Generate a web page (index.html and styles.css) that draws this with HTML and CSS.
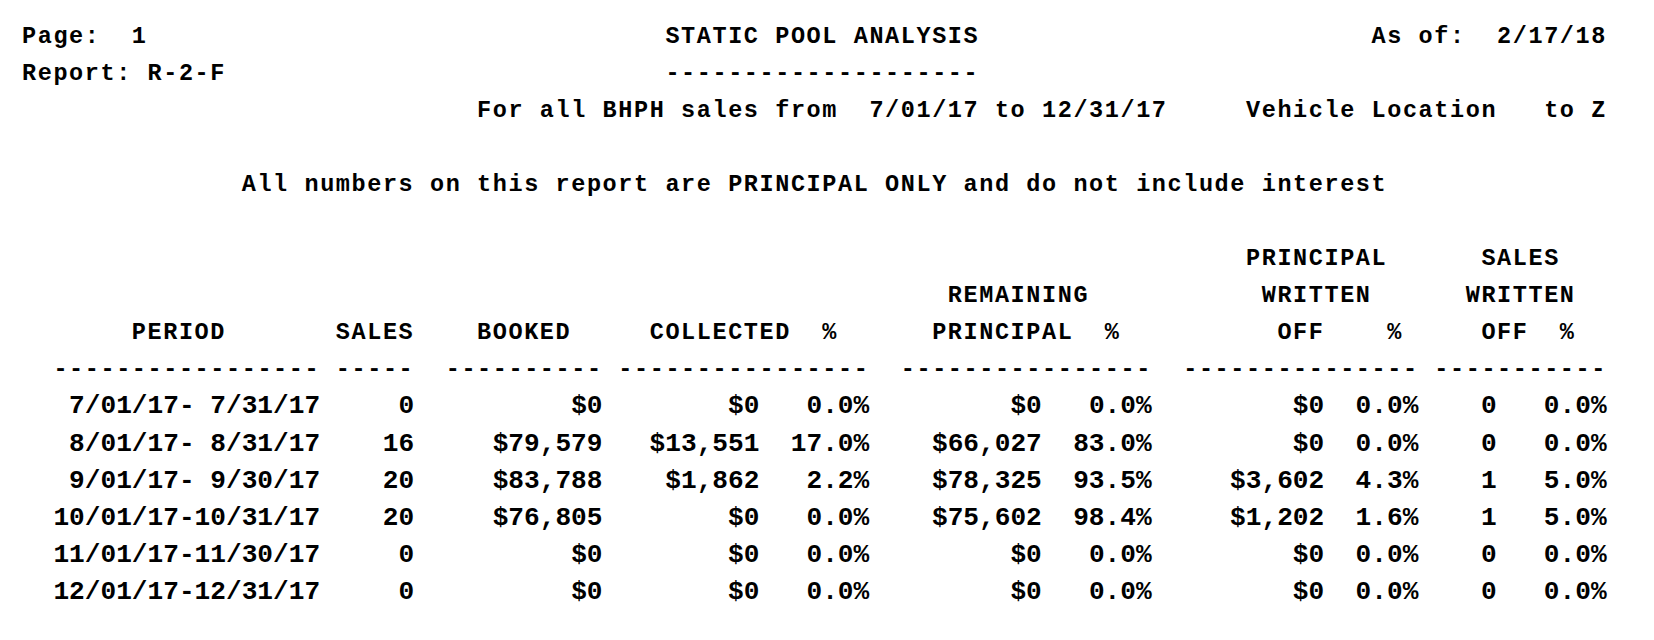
FILE: index.html
```html
<!DOCTYPE html>
<html lang="en">
<head>
<meta charset="utf-8">
<title>Static Pool Analysis</title>
<link rel="stylesheet" href="styles.css">
</head>
<body>
<main class="report">
  <section class="report-head">
    <div class="line">Page:  1                                 STATIC POOL ANALYSIS                         As of:  2/17/18</div>
    <div class="line">Report: R-2-F                            --------------------</div>
    <div class="line">                             For all BHPH sales from  7/01/17 to 12/31/17     Vehicle Location   to Z</div>
    <div class="line"> </div>
    <div class="line">              All numbers on this report are PRINCIPAL ONLY and do not include interest</div>
    <div class="line"> </div>
  </section>
  <section class="col-head">
    <div class="line">                                                                              PRINCIPAL      SALES</div>
    <div class="line">                                                           REMAINING           WRITTEN      WRITTEN</div>
    <div class="line">       PERIOD       SALES    BOOKED     COLLECTED  %      PRINCIPAL  %          OFF    %     OFF  %</div>
    <div class="line">  ----------------- -----  ---------- ----------------  ----------------  --------------- -----------</div>
  </section>
  <section class="rows">
    <div class="row"><span>7/01/17- 7/31/17</span><span>0</span><span>$0</span><span>$0</span><span>0.0%</span><span>$0</span><span>0.0%</span><span>$0</span><span>0.0%</span><span>0</span><span>0.0%</span></div>
    <div class="row"><span>8/01/17- 8/31/17</span><span>16</span><span>$79,579</span><span>$13,551</span><span>17.0%</span><span>$66,027</span><span>83.0%</span><span>$0</span><span>0.0%</span><span>0</span><span>0.0%</span></div>
    <div class="row"><span>9/01/17- 9/30/17</span><span>20</span><span>$83,788</span><span>$1,862</span><span>2.2%</span><span>$78,325</span><span>93.5%</span><span>$3,602</span><span>4.3%</span><span>1</span><span>5.0%</span></div>
    <div class="row"><span>10/01/17-10/31/17</span><span>20</span><span>$76,805</span><span>$0</span><span>0.0%</span><span>$75,602</span><span>98.4%</span><span>$1,202</span><span>1.6%</span><span>1</span><span>5.0%</span></div>
    <div class="row"><span>11/01/17-11/30/17</span><span>0</span><span>$0</span><span>$0</span><span>0.0%</span><span>$0</span><span>0.0%</span><span>$0</span><span>0.0%</span><span>0</span><span>0.0%</span></div>
    <div class="row"><span>12/01/17-12/31/17</span><span>0</span><span>$0</span><span>$0</span><span>0.0%</span><span>$0</span><span>0.0%</span><span>$0</span><span>0.0%</span><span>0</span><span>0.0%</span></div>
  </section>
</main>
</body>
</html>
```

FILE: styles.css
```css
:root {
  --cw: 15.69px;
  --lh: 37.06px;
}

html, body {
  margin: 0;
  padding: 0;
  background: #ffffff;
}

body {
  color: #000000;
  font-family: "Liberation Mono", "DejaVu Sans Mono", monospace;
  font-weight: 700;
}

.report {
  padding: 18px 0 0 22px;
}

.line {
  white-space: pre;
  height: var(--lh);
  line-height: var(--lh);
  font-size: 23.5px;
  letter-spacing: calc(var(--cw) - 14.1px);
}

.rows {
  display: flex;
  flex-direction: column;
}

.row {
  display: grid;
  grid-template-columns:
    calc(19 * var(--cw)) calc(6 * var(--cw)) calc(12 * var(--cw))
    calc(10 * var(--cw)) calc(7 * var(--cw)) calc(11 * var(--cw))
    calc(7 * var(--cw)) calc(11 * var(--cw)) calc(6 * var(--cw))
    calc(5 * var(--cw)) calc(7 * var(--cw));
  height: var(--lh);
  line-height: var(--lh);
  font-size: 26.15px;
}

.row span {
  white-space: pre;
  text-align: right;
}
```
